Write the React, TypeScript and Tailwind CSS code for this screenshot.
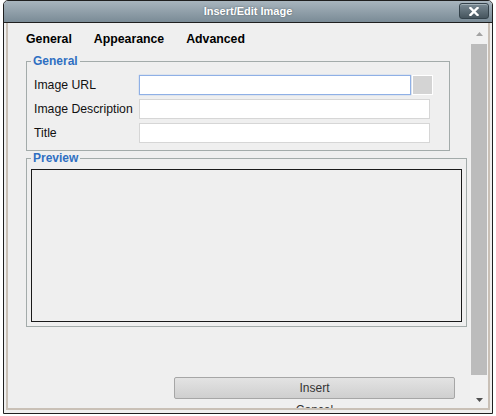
import React from "react";

function Row({ label, children }: { label: string; children: React.ReactNode }) {
  return (
    <div className="flex h-[20px] items-center">
      <div className="w-[105px] text-[12.25px] leading-[16px] text-[#111]">{label}</div>
      {children}
    </div>
  );
}

export default function App() {
  return (
    <div className="h-[416px] w-[496px] overflow-hidden bg-white font-['Liberation_Sans',Arial,sans-serif]">
      <div className="ml-[3px] flex h-[414px] w-[490px] flex-col overflow-hidden rounded-t-[5px] border border-[#1f1f1f] bg-[#efefef]">
        {/* Title bar */}
        <div className="relative h-[22px] shrink-0 border-b border-[#1f1f1f] bg-gradient-to-b from-[#a8b5be] to-[#7a8b96] text-center text-[11px] font-bold leading-[21px] text-white [text-shadow:0_0_2px_#4f5c66]">
          Insert/Edit Image
          <div className="absolute right-[3px] top-[2px] flex h-[16px] w-[30px] items-center justify-center rounded-[3px] border border-[#34424b] bg-gradient-to-b from-[#7a8a94] to-[#46555e] shadow-[inset_0_1px_0_#a3b0b7]">
            <svg width="10" height="9" viewBox="0 0 10 9">
              <path d="M1.5 1 L8.5 8 M8.5 1 L1.5 8" stroke="#ffffff" strokeWidth="2.4" strokeLinecap="square" />
            </svg>
          </div>
        </div>
        {/* Body */}
        <div className="flex min-h-0 flex-1 flex-col px-[2px] pb-[3px]">
          <div className="flex min-h-0 flex-1 border-x-2 border-b-2 border-[#c9c0b6]">
            {/* Content */}
            <div className="flex min-w-0 flex-1 flex-col overflow-hidden pl-[18px]">
              <div className="flex gap-[22px] pt-[8px] text-[12.3px] font-bold leading-[16px] text-black">
                <span>General</span>
                <span>Appearance</span>
                <span>Advanced</span>
              </div>

              <fieldset className="mt-[7px] w-[424px] shrink-0 border border-[#a3abaa] px-[4px] pb-[7px] pt-[7px]">
                <legend className="px-[2px] text-[12px] font-bold leading-[14px] text-[#2f6fc2]">General</legend>
                <div className="flex flex-col gap-[4px] pl-[3px]">
                  <Row label="Image URL">
                    <input
                      readOnly
                      className="h-[20px] w-[272px] border border-[#8fb0e6] bg-white shadow-[0_0_1px_#8fb0e6] outline-none"
                    />
                    <div className="ml-[1px] h-[20px] w-[21px] border border-white bg-[#d4d4d4]" />
                  </Row>
                  <Row label="Image Description">
                    <input readOnly className="h-[20px] w-[291px] border border-[#d6d6d6] bg-white outline-none" />
                  </Row>
                  <Row label="Title">
                    <input readOnly className="h-[20px] w-[291px] border border-[#d6d6d6] bg-white outline-none" />
                  </Row>
                </div>
              </fieldset>

              <fieldset className="w-[441px] shrink-0 border border-[#a3abaa] px-[4px] pb-[4px] pt-[4px]">
                <legend className="px-[2px] text-[12px] font-bold leading-[14px] text-[#2f6fc2]">Preview</legend>
                <div className="h-[153px] w-[431px] border border-[#1a1a1a]" />
              </fieldset>

              <button className="ml-[148px] mt-[50px] h-[22px] w-[281px] shrink-0 rounded-[2px] border border-[#a6a6a6] bg-gradient-to-b from-[#e3e3e3] to-[#cfcfcf] text-[12px] leading-[16px] text-[#333]">
                Insert
              </button>
              <div className="ml-[148px] mt-[3px] w-[281px] shrink-0 text-center text-[12px] leading-[16px] text-[#333]">
                Cancel
              </div>
            </div>

            {/* Scrollbar */}
            <div className="flex w-[18px] shrink-0 flex-col bg-[#f1f1f1]">
              <div className="flex h-[21px] shrink-0 items-center justify-center">
                <svg width="7" height="4" viewBox="0 0 7 4">
                  <polygon points="0,4 3.5,0 7,4" fill="#a3a3a3" />
                </svg>
              </div>
              <div className="mx-[1px] h-[331px] shrink-0 bg-[#bcbcbc]" />
              <div className="flex-1" />
              <div className="flex h-[17px] shrink-0 items-center justify-center">
                <svg width="7" height="4" viewBox="0 0 7 4">
                  <polygon points="0,0 7,0 3.5,4" fill="#505050" />
                </svg>
              </div>
            </div>
          </div>
        </div>
      </div>
    </div>
  );
}
